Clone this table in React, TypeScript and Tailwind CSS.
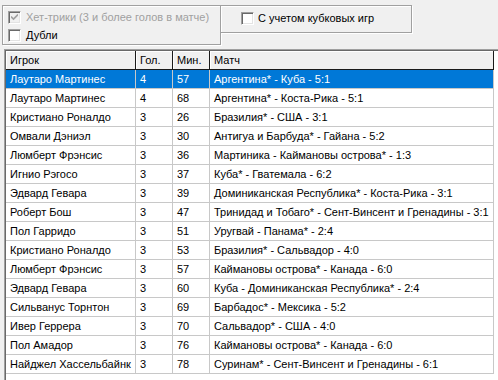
import React from 'react';

type Goal = { player: string; goals: number; minute: number; match: string };

const rows: Goal[] = [
  { player: 'Лаутаро Мартинес', goals: 4, minute: 57, match: 'Аргентина* - Куба - 5:1' },
  { player: 'Лаутаро Мартинес', goals: 4, minute: 68, match: 'Аргентина* - Коста-Рика - 5:1' },
  { player: 'Кристиано Роналдо', goals: 3, minute: 26, match: 'Бразилия* - США - 3:1' },
  { player: 'Омвали Дэниэл', goals: 3, minute: 30, match: 'Антигуа и Барбуда* - Гайана - 5:2' },
  { player: 'Люмберт Фрэнсис', goals: 3, minute: 36, match: 'Мартиника - Каймановы острова* - 1:3' },
  { player: 'Игнио Рэгосо', goals: 3, minute: 37, match: 'Куба* - Гватемала - 6:2' },
  { player: 'Эдвард Гевара', goals: 3, minute: 39, match: 'Доминиканская Республика* - Коста-Рика - 3:1' },
  { player: 'Роберт Бош', goals: 3, minute: 47, match: 'Тринидад и Тобаго* - Сент-Винсент и Гренадины - 3:1' },
  { player: 'Пол Гарридо', goals: 3, minute: 51, match: 'Уругвай - Панама* - 2:4' },
  { player: 'Кристиано Роналдо', goals: 3, minute: 53, match: 'Бразилия* - Сальвадор - 4:0' },
  { player: 'Люмберт Фрэнсис', goals: 3, minute: 57, match: 'Каймановы острова* - Канада - 6:0' },
  { player: 'Эдвард Гевара', goals: 3, minute: 60, match: 'Куба - Доминиканская Республика* - 2:4' },
  { player: 'Сильванус Торнтон', goals: 3, minute: 69, match: 'Барбадос* - Мексика - 5:2' },
  { player: 'Ивер Геррера', goals: 3, minute: 70, match: 'Сальвадор* - США - 4:0' },
  { player: 'Пол Амадор', goals: 3, minute: 76, match: 'Каймановы острова* - Канада - 6:0' },
  { player: 'Найджел Хассельбайнк', goals: 3, minute: 78, match: 'Суринам* - Сент-Винсент и Гренадины - 6:1' },
];

const CheckBox: React.FC<{ checked?: boolean; disabled?: boolean }> = ({ checked, disabled }) => (
  <div
    className={`w-[13px] h-[13px] shrink-0 border border-t-[#a0a0a0] border-l-[#a0a0a0] border-r-white border-b-white shadow-[inset_1px_1px_0_#696969,inset_-1px_-1px_0_#e3e3e3] flex items-center justify-center ${
      disabled ? 'bg-[#f0f0f0]' : 'bg-white'
    }`}
  >
    {checked && (
      <svg width="7" height="7" viewBox="0 0 7 7">
        <path d="M0 2.5 L2.5 5 L7 0.5" fill="none" stroke={disabled ? '#a0a0a0' : '#000'} strokeWidth="1.6" />
      </svg>
    )}
  </div>
);

const cols = 'grid grid-cols-[130px_37px_37px_284px]';

export default function App() {
  return (
    <div className="w-[498px] h-[380px] overflow-hidden bg-[#f0f0f0] pt-[5px] pl-[2px] flex flex-col text-[11px] text-black font-['Liberation_Sans',Arial,sans-serif]">
      <div className="flex items-start">
        <div className="w-[219px] h-[40px] border border-[#a0a0a0] shadow-[inset_1px_1px_0_#fff,1px_1px_0_#fff] pl-[5px] pt-[5px] flex flex-col gap-[5px]">
          <div className="flex items-center gap-[5px] h-[13px]">
            <CheckBox checked disabled />
            <span className="text-[#a0a0a0] leading-[13px]">Хет-трики (3 и более голов в матче)</span>
          </div>
          <div className="flex items-center gap-[5px] h-[13px]">
            <CheckBox />
            <span className="leading-[13px]">Дубли</span>
          </div>
        </div>
        <div className="w-[192px] h-[28px] -ml-px border border-[#a0a0a0] shadow-[inset_1px_1px_0_#fff,1px_1px_0_#fff] pl-[20px] pt-[6px]">
          <div className="flex items-center gap-[4px] h-[13px]">
            <CheckBox />
            <span className="leading-[13px]">С учетом кубковых игр</span>
          </div>
        </div>
      </div>

      <div className="mt-[4px] ml-[2px] flex-1 border-t border-l border-[#a0a0a0] bg-white">
        <div className="h-full border-t border-l border-[#696969] bg-white">
          <div className={`${cols} h-[19px]`}>
            {['Игрок', 'Гол.', 'Мин.', 'Матч'].map((h) => (
              <div
                key={h}
                className="bg-[#f0f0f0] border-r border-b border-[#1a1a1a] shadow-[inset_1px_1px_0_#fff] pl-[4px] leading-[18px]"
              >
                {h}
              </div>
            ))}
          </div>
          {rows.map((r, i) => {
            const sel = i === 0;
            const cell = `border-r border-b border-[#c8c8c8] pl-[4px] h-[19px] leading-[18px] whitespace-nowrap overflow-hidden ${
              sel ? 'bg-[#0078d7] text-white' : ''
            }`;
            return (
              <div key={i} className={cols}>
                <div className={cell}>{r.player}</div>
                <div className={cell}>{r.goals}</div>
                <div className={cell}>{r.minute}</div>
                <div className={cell}>{r.match}</div>
              </div>
            );
          })}
        </div>
      </div>
    </div>
  );
}
